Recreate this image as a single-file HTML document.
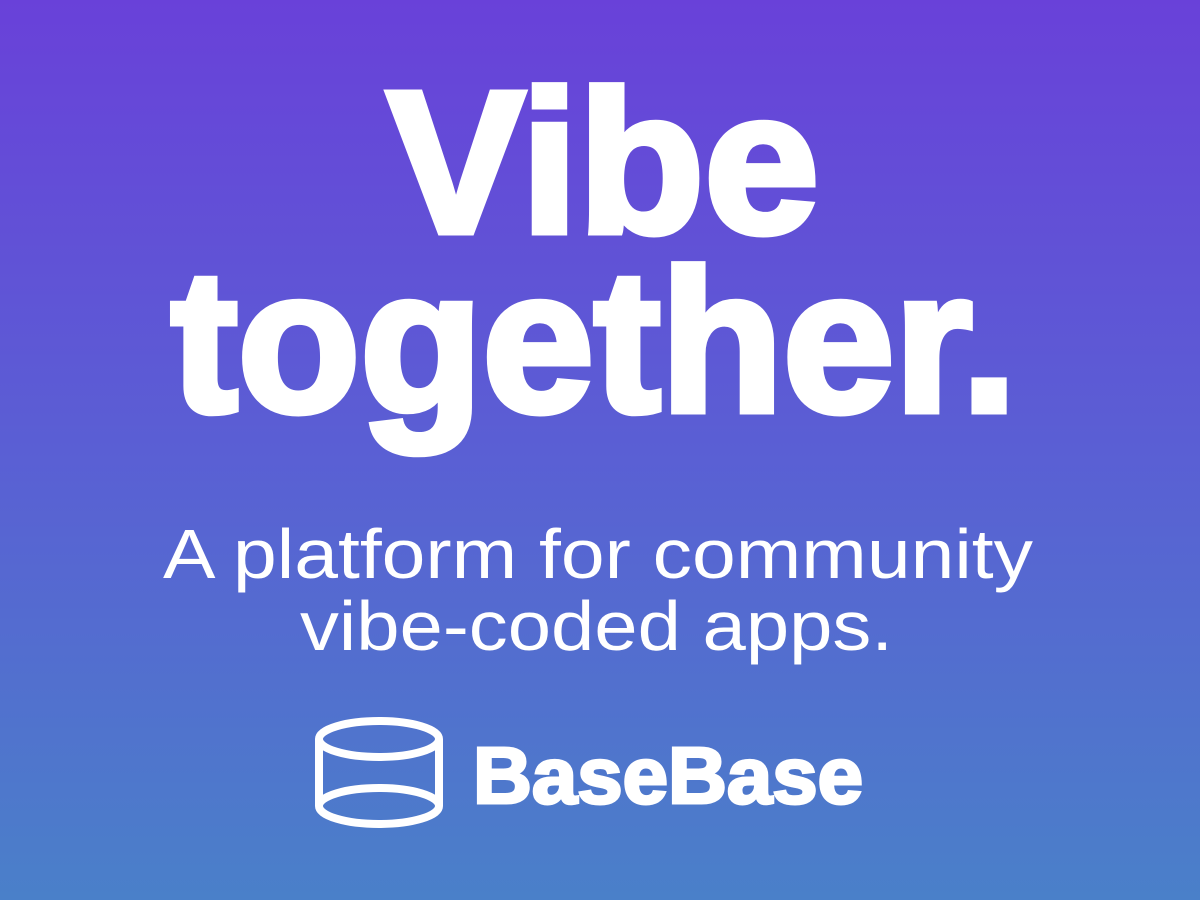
<!DOCTYPE html>
<html><head><meta charset="utf-8"><style>
html,body{margin:0;padding:0;width:1200px;height:900px;overflow:hidden}
body{background:linear-gradient(180deg,#6941d9 0%,#5a5fd4 50%,#4a80c9 100%)}
svg{display:block}
text{font-family:"Liberation Sans",sans-serif;fill:#fff}
</style></head><body>
<svg width="1200" height="900" viewBox="0 0 1200 900">
<g stroke="#fff" stroke-width="7" stroke-linejoin="miter" stroke-miterlimit="2">
<text x="387" y="232" font-size="202" font-weight="700" textLength="432" lengthAdjust="spacingAndGlyphs">Vibe</text>
<text x="171" y="411" font-size="202" font-weight="700" textLength="846" lengthAdjust="spacingAndGlyphs">together.</text>
</g>
<text x="163" y="578" font-size="70" textLength="870" lengthAdjust="spacingAndGlyphs">A platform for community</text>
<text x="300" y="650" font-size="70" textLength="593" lengthAdjust="spacingAndGlyphs">vibe-coded apps.</text>
<g fill="none" stroke="#fff" stroke-width="8">
<ellipse cx="379" cy="739" rx="60" ry="18"/>
<path d="M319 739 V806 A60 18 0 0 0 439 806 V739"/>
<path d="M319 806 A60 18 0 0 1 439 806"/>
</g>
<text x="473" y="803" font-size="80" font-weight="700" textLength="390" lengthAdjust="spacingAndGlyphs" stroke="#fff" stroke-width="3" stroke-linejoin="miter" stroke-miterlimit="2">BaseBase</text>
</svg>
</body></html>
